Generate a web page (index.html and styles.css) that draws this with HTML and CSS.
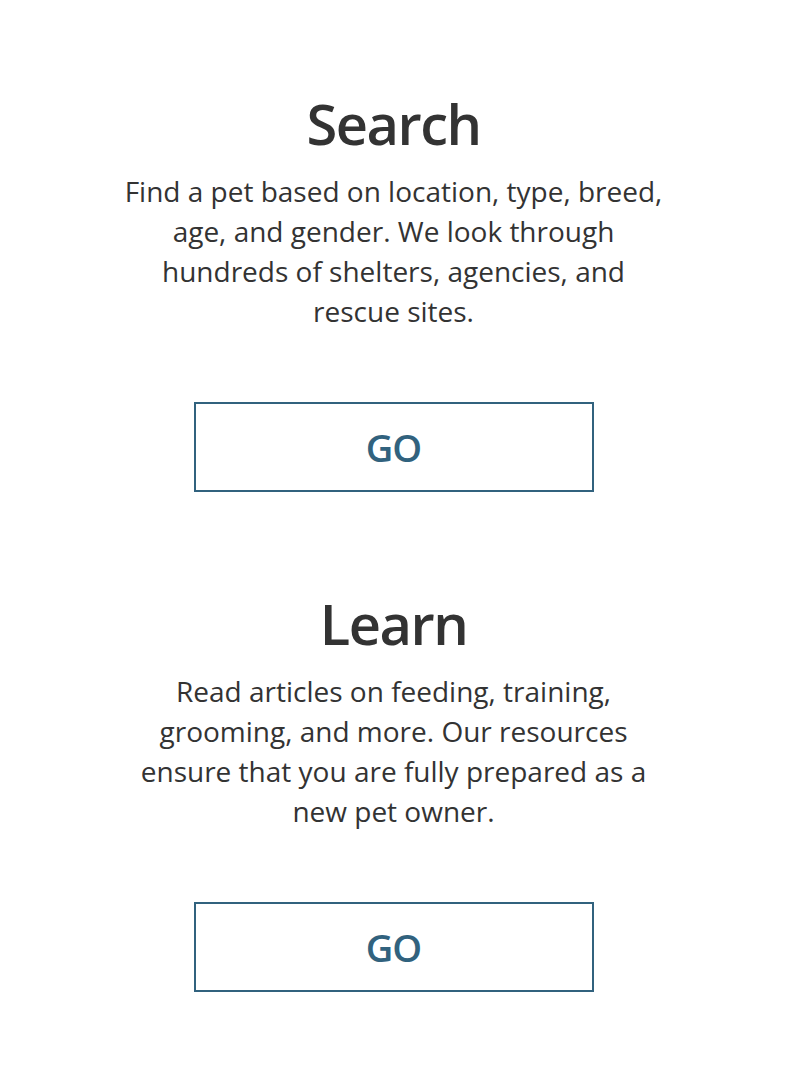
FILE: index.html
```html
<!DOCTYPE html>
<html>
<head>
<meta charset="utf-8">
<link rel="stylesheet" href="styles.css">
</head>
<body>
<main class="page">
  <section class="feature">
    <h2 class="feature-title">Search</h2>
    <p class="feature-text">Find a pet based on location, type, breed, age, and gender. We look through hundreds of shelters, agencies, and rescue sites.</p>
    <a class="go-btn" href="#">GO</a>
  </section>
  <section class="feature">
    <h2 class="feature-title">Learn</h2>
    <p class="feature-text">Read articles on feeding, training, grooming, and more. Our resources ensure that you are fully prepared as a new pet owner.</p>
    <a class="go-btn" href="#">GO</a>
  </section>
</main>
</body>
</html>
```
FILE: styles.css
```css
html, body {
  margin: 0;
  padding: 0;
  background: #ffffff;
}
body {
  font-family: "Open Sans", "Noto Sans", sans-serif;
  color: #333333;
}
.page {
  display: flex;
  flex-direction: column;
  align-items: center;
  padding-top: 82px;
  padding-right: 7px;
}
.feature {
  display: flex;
  flex-direction: column;
  align-items: center;
  width: 546px;
  height: 500px;
  text-align: center;
}
.feature-title {
  margin: 0;
  font-size: 56px;
  font-weight: 600;
  line-height: 82px;
  letter-spacing: -1.5px;
}
.feature-text {
  margin: 7px 0 0;
  font-size: 28px;
  line-height: 40px;
  font-weight: 400;
}
.go-btn {
  display: flex;
  align-items: center;
  justify-content: center;
  box-sizing: border-box;
  width: 400px;
  height: 90px;
  margin-top: 71px;
  border: 2px solid #31627e;
  color: #31627e;
  font-size: 38px;
  font-weight: 600;
  letter-spacing: -1px;
  text-decoration: none;
}
```
